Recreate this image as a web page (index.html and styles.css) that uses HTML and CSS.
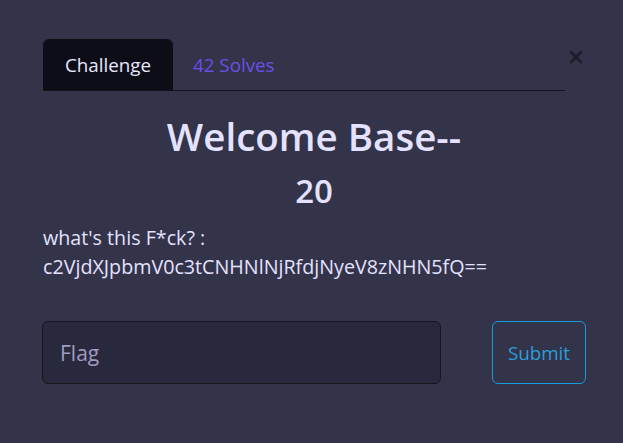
FILE: index.html
```html
<!DOCTYPE html>
<html>
<head>
<meta charset="utf-8">
<link rel="stylesheet" href="styles.css">
</head>
<body>
<div class="modal">
  <div class="top">
    <nav class="tabs">
      <div class="tab active">Challenge</div>
      <div class="tab solves">42 Solves</div>
    </nav>
    <button class="close" aria-label="Close">
      <svg width="14" height="14" viewBox="0 0 14 14"><path d="M2 2L12 12M12 2L2 12" stroke="#1c1c2a" stroke-width="2.6" stroke-linecap="round"/></svg>
    </button>
  </div>
  <h3 class="name">Welcome Base--</h3>
  <h4 class="value">20</h4>
  <div class="desc">
    <p>what's this F*ck? :</p>
    <p>c2VjdXJpbmV0c3tCNHNlNjRfdjNyeV8zNHN5fQ==</p>
  </div>
  <form class="submit-row">
    <input class="flag" type="text" placeholder="Flag">
    <button class="submit" type="button">Submit</button>
  </form>
</div>
</body>
</html>
```
FILE: styles.css
```css
* { box-sizing: border-box; }
html, body { margin: 0; padding: 0; }
body {
  background: #33334a;
  font-family: "Open Sans", "Noto Sans", sans-serif;
  color: #e4e2ff;
  width: 623px;
  height: 443px;
  overflow: hidden;
}
.modal {
  padding: 39px 0 0 43px;
}
.top {
  display: flex;
  align-items: flex-start;
}
.tabs {
  display: flex;
  width: 522px;
  border-bottom: 1px solid #14141f;
}
.tab {
  height: 51px;
  display: flex;
  align-items: center;
  font-size: 18.8px;
}
.tab.active {
  background: #0d0d17;
  border-radius: 6px 6px 0 0;
  width: 130px;
  justify-content: center;
  color: #e8e8ff;
}
.tab.solves {
  padding-left: 20px;
  color: #6a4fe6;
}
.close {
  background: none;
  border: 0;
  padding: 0;
  margin: 11px 0 0 4px;
  width: 14px;
  height: 14px;
  display: flex;
}
.name {
  margin: 21px 0 0;
  width: 542px;
  text-align: center;
  font-size: 38.5px;
  font-weight: 600;
  line-height: 48px;
  color: #e4e2ff;
}
.value {
  margin: 11px 0 0;
  width: 542px;
  text-align: center;
  font-size: 33px;
  font-weight: 600;
  line-height: 40px;
  color: #e4e2ff;
}
.desc {
  margin-top: 12px;
  font-size: 19.7px;
  line-height: 29px;
  color: #e4e2ff;
}
.desc p { margin: 0; }
.submit-row {
  display: flex;
  margin-top: 40px;
  margin-left: -1px;
}
.flag {
  width: 399px;
  height: 63px;
  background: #29293e;
  border: 1px solid #16161f;
  border-radius: 6px;
  padding: 0 17px;
  font-family: inherit;
  font-size: 21px;
  color: #e4e2ff;
  outline: none;
}
.flag::placeholder { color: #a09cc0; }
.submit {
  margin-left: 51px;
  width: 94px;
  height: 63px;
  background: transparent;
  border: 1px solid #1a9ad8;
  border-radius: 6px;
  color: #2a9fd9;
  font-family: inherit;
  font-size: 18.8px;
  padding: 0;
}
```
